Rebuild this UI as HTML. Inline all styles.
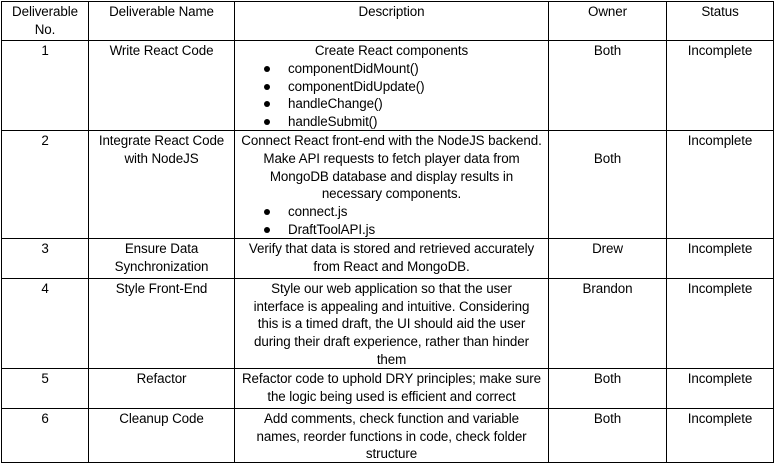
<!DOCTYPE html>
<html><head><style>
body{margin:0;background:#fff;}
table{position:absolute;left:1px;top:1px;border-collapse:collapse;table-layout:fixed;width:772px;font-family:"Liberation Sans",Arial,sans-serif;font-size:13.4px;line-height:17.8px;color:#000;letter-spacing:-0.1px}
td{border:1px solid #000;vertical-align:top;text-align:center;padding:0 3px;white-space:nowrap;overflow:hidden}
td>div{position:relative;top:1px}
ul{margin:0;padding:0;list-style:none;text-align:left}
li{position:relative;padding-left:50px}
li:before{content:"";position:absolute;left:26px;top:6px;width:6px;height:6px;border-radius:50%;background:#000}
</style></head><body>
<table>
<colgroup><col style="width:87px"><col style="width:146px"><col style="width:314px"><col style="width:118px"><col style="width:107px"></colgroup>
<tr style="height:39px"><td><div>Deliverable<br>No.</div></td><td><div>Deliverable Name</div></td><td><div>Description</div></td><td><div>Owner</div></td><td><div>Status</div></td></tr>
<tr style="height:90px"><td><div>1</div></td><td><div>Write React Code</div></td><td><div>Create React components<ul><li>componentDidMount()</li><li>componentDidUpdate()</li><li>handleChange()</li><li>handleSubmit()</li></ul></div></td><td><div>Both</div></td><td><div>Incomplete</div></td></tr>
<tr style="height:107px"><td><div>2</div></td><td><div>Integrate React Code<br>with NodeJS</div></td><td><div>Connect React front-end with the NodeJS backend.<br>Make API requests to fetch player data from<br>MongoDB database and display results in<br>necessary components.<ul><li>connect.js</li><li>DraftToolAPI.js</li></ul></div></td><td><div style="padding-top:18px">Both</div></td><td><div>Incomplete</div></td></tr>
<tr style="height:40px"><td><div>3</div></td><td><div>Ensure Data<br>Synchronization</div></td><td><div>Verify that data is stored and retrieved accurately<br>from React and MongoDB.</div></td><td><div>Drew</div></td><td><div>Incomplete</div></td></tr>
<tr style="height:90px"><td><div>4</div></td><td><div>Style Front-End</div></td><td><div>Style our web application so that the user<br>interface is appealing and intuitive. Considering<br>this is a timed draft, the UI should aid the user<br>during their draft experience, rather than hinder<br>them</div></td><td><div>Brandon</div></td><td><div>Incomplete</div></td></tr>
<tr style="height:40px"><td><div>5</div></td><td><div>Refactor</div></td><td><div>Refactor code to uphold DRY principles; make sure<br>the logic being used is efficient and correct</div></td><td><div>Both</div></td><td><div>Incomplete</div></td></tr>
<tr style="height:54px"><td><div>6</div></td><td><div>Cleanup Code</div></td><td><div>Add comments, check function and variable<br>names, reorder functions in code, check folder<br>structure</div></td><td><div>Both</div></td><td><div>Incomplete</div></td></tr>
</table>
</body></html>
